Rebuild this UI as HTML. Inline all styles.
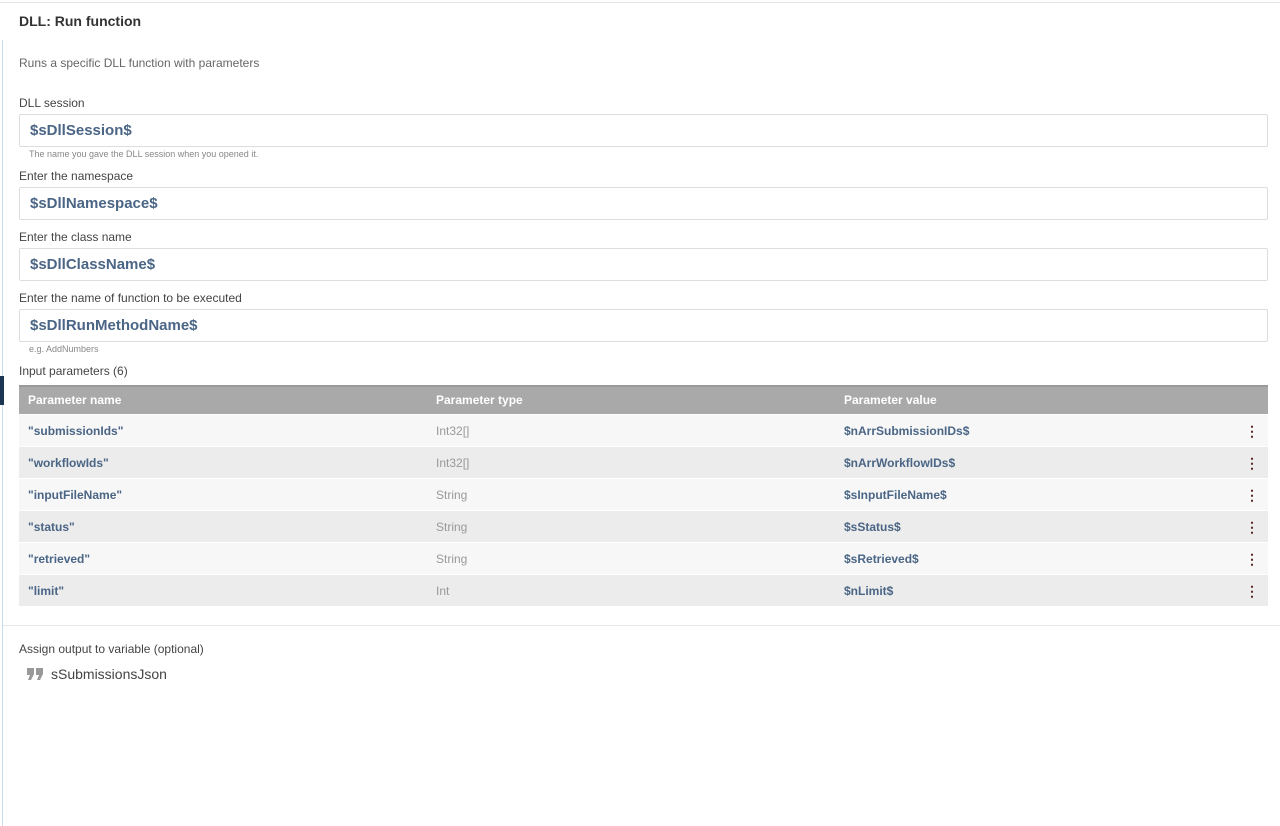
<!DOCTYPE html>
<html><head><style>
body{margin:0;width:1280px;height:826px;background:#fff;font-family:"Liberation Sans",sans-serif;position:relative;overflow:hidden;color:#444}
.a{position:absolute}
.lbl{position:absolute;left:19px;font-size:12px;color:#444}
.inp{position:absolute;left:19px;width:1247px;height:31px;border:1px solid #ddd;border-radius:2px;font-size:15px;font-weight:bold;color:#4a6585;line-height:31px;text-indent:10px}
.hint{position:absolute;left:29px;font-size:9px;color:#888}
.row{position:absolute;left:19px;width:1249px;height:31px;font-size:12px;line-height:32px}
.row span{position:absolute;top:0}
.c1{left:9px}.c2{left:417px}.c3{left:825px}
.hd{background:#a9a9a9;color:#fff;font-weight:bold;border-top:2px solid #999;height:27px;line-height:26px}
.l{background:#f7f7f7}.d{background:#ececec}
.n{color:#4a6585;font-weight:bold}
.t{color:#999}
.m{right:9px;color:#5a2a2a;font-weight:bold;font-size:14px}
</style></head><body>
<div class="a" style="left:0;top:2px;width:1280px;height:1px;background:#e3e3ea"></div>
<div class="a" style="left:2px;top:40px;width:1px;height:786px;background:#c8dcef"></div>
<div class="a" style="left:0;top:376px;width:4px;height:29px;background:#1c3552"></div>
<div class="a" style="left:19px;top:13px;font-size:14px;font-weight:bold;color:#333">DLL: Run function</div>
<div class="a" style="left:19px;top:56px;font-size:12px;color:#666">Runs a specific DLL function with parameters</div>
<div class="lbl" style="top:96px">DLL session</div>
<div class="inp" style="top:114px">$sDllSession$</div>
<div class="hint" style="top:149px">The name you gave the DLL session when you opened it.</div>
<div class="lbl" style="top:169px">Enter the namespace</div>
<div class="inp" style="top:187px">$sDllNamespace$</div>
<div class="lbl" style="top:230px">Enter the class name</div>
<div class="inp" style="top:248px">$sDllClassName$</div>
<div class="lbl" style="top:291px">Enter the name of function to be executed</div>
<div class="inp" style="top:309px">$sDllRunMethodName$</div>
<div class="hint" style="top:344px">e.g. AddNumbers</div>
<div class="lbl" style="top:364px">Input parameters (6)</div>
<div class="row hd" style="top:385px"><span class="c1">Parameter name</span><span class="c2">Parameter type</span><span class="c3">Parameter value</span></div>
<div class="row l" style="top:415px"><span class="c1 n">"submissionIds"</span><span class="c2 t">Int32[]</span><span class="c3 n">$nArrSubmissionIDs$</span><span class="m">⋮</span></div>
<div class="row d" style="top:447px"><span class="c1 n">"workflowIds"</span><span class="c2 t">Int32[]</span><span class="c3 n">$nArrWorkflowIDs$</span><span class="m">⋮</span></div>
<div class="row l" style="top:479px"><span class="c1 n">"inputFileName"</span><span class="c2 t">String</span><span class="c3 n">$sInputFileName$</span><span class="m">⋮</span></div>
<div class="row d" style="top:511px"><span class="c1 n">"status"</span><span class="c2 t">String</span><span class="c3 n">$sStatus$</span><span class="m">⋮</span></div>
<div class="row l" style="top:543px"><span class="c1 n">"retrieved"</span><span class="c2 t">String</span><span class="c3 n">$sRetrieved$</span><span class="m">⋮</span></div>
<div class="row d" style="top:575px"><span class="c1 n">"limit"</span><span class="c2 t">Int</span><span class="c3 n">$nLimit$</span><span class="m">⋮</span></div>
<div class="a" style="left:3px;top:625px;width:1277px;height:1px;background:#e6e6e6"></div>
<div class="lbl" style="top:642px">Assign output to variable (optional)</div>
<svg class="a" style="left:27px;top:668px" width="17" height="12" viewBox="0 0 17 12"><path d="M0 0h7v6l-3 6H1l2-5H0z M9 0h7v6l-3 6h-3l2-5H9z" fill="#999"/></svg>
<div class="a" style="left:51px;top:666px;font-size:14px;color:#444">sSubmissionsJson</div>
</body></html>
